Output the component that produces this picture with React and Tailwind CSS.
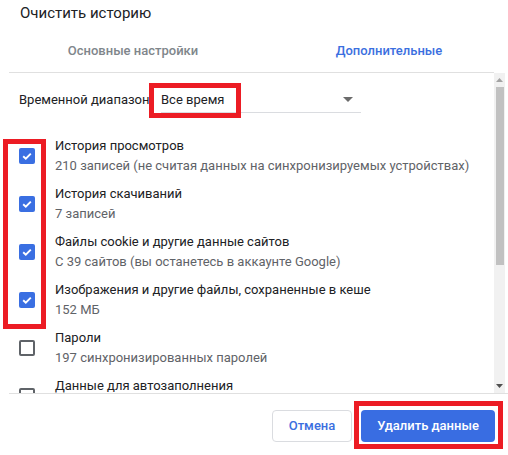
import React from "react";

const items = [
  { t: "История просмотров", d: "210 записей (не считая данных на синхронизируемых устройствах)", c: true },
  { t: "История скачиваний", d: "7 записей", c: true },
  { t: "Файлы cookie и другие данные сайтов", d: "С 39 сайтов (вы останетесь в аккаунте Google)", c: true },
  { t: "Изображения и другие файлы, сохраненные в кеше", d: "152 МБ", c: true },
  { t: "Пароли", d: "197 синхронизированных паролей", c: false },
  { t: "Данные для автозаполнения", d: "3 записи", c: false },
];

function Check({ on }) {
  if (on)
    return (
      <div className="w-[16px] h-[16px] rounded-[2px] bg-[#3a6fe2] flex items-center justify-center shrink-0">
        <svg width="12" height="12" viewBox="0 0 12 12">
          <path d="M2.2 6.2 L4.8 8.7 L9.8 3.6" fill="none" stroke="white" strokeWidth="1.9" />
        </svg>
      </div>
    );
  return <div className="w-[16px] h-[16px] rounded-[2px] border-2 border-[#5f6368] shrink-0" />;
}

export default function App() {
  return (
    <div
      className="relative w-[508px] h-[455px] bg-white overflow-hidden text-[#202124]"
      style={{ fontFamily: "Roboto, 'Noto Sans', sans-serif" }}
    >
      <div className="h-[30px] pl-[20px] pt-[3px] text-[15px] leading-[20px] text-[#202124]">Очистить историю</div>
      <div className="h-[42px] flex items-center ml-[5px] w-[512px] text-[13px] font-medium">
        <div className="w-[256px] text-center text-[#80868b]">Основные настройки</div>
        <div className="w-[256px] text-center text-[#3b6fe0]">Дополнительные</div>
      </div>
      <div className="ml-[9px] flex flex-col">
        <div className="h-px w-[485px] bg-[#e0e0e0]" />
        <div className="flex h-[320px]">
          <div className="w-[485px] overflow-hidden text-[13px]">
            <div className="mt-[14px] h-[26px] flex items-center pl-[10px]">
              <div className="w-[142px]">Временной диапазон</div>
              <div className="w-[200px] h-[26px] border-b border-[#dadce0] flex items-center justify-between pr-[8px]">
                <span>Все время</span>
                <svg width="10" height="5" viewBox="0 0 10 5">
                  <path d="M0 0 L10 0 L5 5 Z" fill="#6b6b6b" />
                </svg>
              </div>
            </div>
            <div className="mt-[19px] flex flex-col">
              {items.map((it) => (
                <div key={it.t} className="h-[48px] shrink-0 flex items-center pl-[10px] gap-[20px]">
                  <Check on={it.c} />
                  <div className="leading-[20px]">
                    <div className="text-[#202124]">{it.t}</div>
                    <div className="text-[#5f6368]">{it.d}</div>
                  </div>
                </div>
              ))}
            </div>
          </div>
          <div className="w-[11px] h-[320px] bg-[#f1f1f1] flex flex-col items-center">
            <svg className="mt-[5px]" width="7" height="4" viewBox="0 0 7 4">
              <path d="M0 4 L7 4 L3.5 0 Z" fill="#a3a3a3" />
            </svg>
            <div className="mt-[5px] w-[8px] h-[178px] bg-[#c1c1c1]" />
            <div className="flex-1" />
            <svg className="mb-[5px]" width="7" height="4" viewBox="0 0 7 4">
              <path d="M0 0 L7 0 L3.5 4 Z" fill="#505050" />
            </svg>
          </div>
        </div>
        <div className="h-px w-[499px] bg-[#e0e0e0]" />
      </div>
      <div className="flex justify-end pt-[16px] pr-[13px] gap-[9px] text-[13px] font-medium">
        <div className="w-[80px] h-[32px] rounded-[4px] border border-[#dadce0] flex items-center justify-center text-[#3b6fe0]">
          Отмена
        </div>
        <div className="w-[134px] h-[32px] rounded-[4px] bg-[#396de2] flex items-center justify-center text-white">
          Удалить данные
        </div>
      </div>

      <div className="absolute left-[149px] top-[83px] w-[92px] h-[35px] border-[5px] border-[#ec1c24]" />
      <div className="absolute left-[3px] top-[139px] w-[43px] h-[190px] border-[5px] border-[#ec1c24]" />
      <div className="absolute left-[354px] top-[401px] w-[149px] h-[48px] border-[5px] border-[#ec1c24]" />
    </div>
  );
}
